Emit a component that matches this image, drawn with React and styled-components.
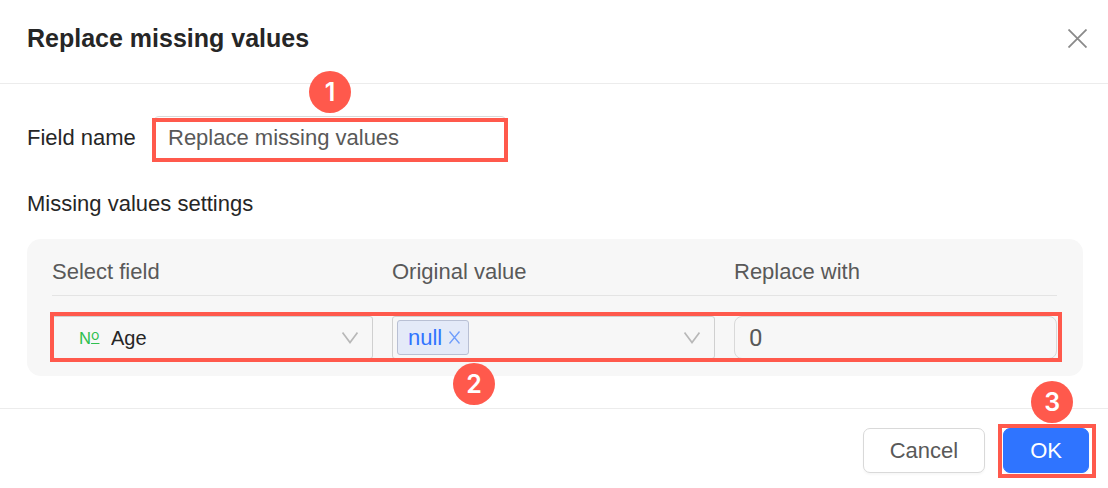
import React, { useState } from "react";
import styled, { createGlobalStyle, css } from "styled-components";

function App() {
  const [fieldName, setFieldName] = useState("Replace missing values");
  const [field, setField] = useState("Age");
  const [tags, setTags] = useState(["null"]);
  const [replacement, setReplacement] = useState("0");

  const removeTag = (tag) => {
    setTags((prevTags) => prevTags.filter((item) => item !== tag));
  };

  return (
    <>
      <GlobalStyle />
      <Dialog role="dialog" aria-labelledby="dialog-title">
        <Header>
          <Title id="dialog-title">Replace missing values</Title>
          <CloseButton type="button" aria-label="Close">
            <CrossIcon width={19} height={19} />
          </CloseButton>
        </Header>
        <Body>
          <FieldRow>
            <Label htmlFor="field-name">Field name</Label>
            <NameHighlight>
              <TextInput
                id="field-name"
                value={fieldName}
                onChange={(e) => setFieldName(e.target.value)}
              />
              <Badge $left="156px" $top="-45px">
                1
              </Badge>
            </NameHighlight>
          </FieldRow>
          <SectionTitle>Missing values settings</SectionTitle>
          <Panel>
            <HeadRow>
              <label htmlFor="select-field">Select field</label>
              <label htmlFor="original-value">Original value</label>
              <label htmlFor="replace-with">Replace with</label>
            </HeadRow>
            <ControlsRow>
              <SelectBox $wide>
                <NumberSign>
                  N<Ordinal>o</Ordinal>
                </NumberSign>
                <Select
                  id="select-field"
                  value={field}
                  onChange={(e) => setField(e.target.value)}
                >
                  <option>Age</option>
                </Select>
                <DownIcon />
              </SelectBox>
              <SelectBox>
                {tags.map((tag) => (
                  <Tag key={tag}>
                    {tag}
                    <TagRemove
                      type="button"
                      aria-label={`Remove ${tag}`}
                      onClick={() => removeTag(tag)}
                    >
                      <CrossIcon width={11} height={13} />
                    </TagRemove>
                  </Tag>
                ))}
                <TagInput id="original-value" />
                <DownIcon />
              </SelectBox>
              <ValueInput
                id="replace-with"
                value={replacement}
                onChange={(e) => setReplacement(e.target.value)}
              />
              <Badge $left="401px" $top="47px">
                2
              </Badge>
            </ControlsRow>
          </Panel>
        </Body>
        <Footer>
          <Button type="button">Cancel</Button>
          <OkHighlight>
            <Button type="button" $primary>
              OK
            </Button>
            <Badge $left="28px" $top="-47px">
              3
            </Badge>
          </OkHighlight>
        </Footer>
      </Dialog>
    </>
  );
}

export default App;

const CrossIcon = ({ width, height }) => (
  <svg
    width={width}
    height={height}
    viewBox={`0 0 ${width} ${height}`}
    aria-hidden="true"
  >
    <path
      d={`M0.5 0.5L${width - 0.5} ${height - 0.5}M${width - 0.5} 0.5L0.5 ${height - 0.5}`}
      fill="none"
      stroke="currentColor"
      strokeWidth={width > 12 ? 1.8 : 1.3}
    />
  </svg>
);

const DownIcon = () => (
  <Chevron width="16" height="12" viewBox="0 0 16 12" aria-hidden="true">
    <path
      d="M0.5 0.5L8 10.5L15.5 0.5"
      fill="none"
      stroke="currentColor"
      strokeWidth="1.7"
    />
  </Chevron>
);

const GlobalStyle = createGlobalStyle`
  * {
    box-sizing: border-box;
  }
  body {
    margin: 0;
    background: #fff;
    color: #262626;
    font-family: "Liberation Sans", Arial, sans-serif;
    font-size: 22px;
    line-height: 30px;
  }
  button, input, select {
    font: inherit;
  }
`;

const Dialog = styled.div`
  background: #fff;
`;
const Header = styled.header`
  display: flex;
  align-items: center;
  justify-content: space-between;
  height: 84px;
  padding: 0 21px 7px 27px;
  border-bottom: 1px solid #ececec;
`;
const Title = styled.h1`
  margin: 0;
  font-size: 25px;
  font-weight: bold;
`;
const CloseButton = styled.button`
  display: flex;
  padding: 0;
  border: 0;
  background: none;
  color: #8a8a8a;
  cursor: pointer;
`;

const Body = styled.main`
  padding: 32px 25px 32px 27px;
`;
const FieldRow = styled.div`
  display: flex;
  align-items: center;
`;
const Label = styled.label`
  width: 126px;
`;

/* red frame laid over the controls of a step */
const frame = css`
  position: relative;
  &::after {
    content: "";
    position: absolute;
    border: 4px solid #ff594c;
    pointer-events: none;
  }
`;
const NameHighlight = styled.div`
  ${frame}
  width: 354px;
  &::after {
    inset: 2px -1px -2px;
  }
`;
const OkHighlight = styled.div`
  ${frame}
  &::after {
    inset: -4px -7px -5px -5px;
  }
`;
const Badge = styled.span`
  position: absolute;
  z-index: 1;
  left: ${(props) => props.$left};
  top: ${(props) => props.$top};
  display: flex;
  align-items: center;
  justify-content: center;
  width: 42px;
  height: 42px;
  border-radius: 50%;
  background: #ff594c;
  color: #fff;
  font-family: Inter, sans-serif;
  font-size: 25px;
  font-weight: 600;
`;

const TextInput = styled.input`
  display: block;
  width: 100%;
  height: 44px;
  padding: 0 14px;
  border: 1px solid #d9d9d9;
  border-radius: 6px;
  background: transparent;
  color: #595959;
  outline: none;
`;
const ValueInput = styled(TextInput)`
  height: 43px;
  border-radius: 8px;
  font-family: Roboto, sans-serif;
  font-size: 24px;
`;

const SectionTitle = styled.h2`
  margin: 29px 0 20px;
  font-size: 22px;
  font-weight: normal;
`;
const Panel = styled.section`
  padding: 18px 26px 17px 25px;
  border-radius: 14px;
  background: #f7f7f7;
`;
const columns = css`
  display: grid;
  grid-template-columns: 321fr 323fr 323fr;
  column-gap: 19px;
`;
const HeadRow = styled.div`
  ${columns}
  padding-bottom: 8px;
  border-bottom: 1px solid #e4e4e4;
  color: #595959;
`;
const ControlsRow = styled.div`
  ${columns}
  ${frame}
  margin-top: 20px;
  &::after {
    inset: -4px -5px -3px -2px;
  }
`;
const SelectBox = styled.div`
  display: flex;
  align-items: center;
  min-width: 0;
  height: 43px;
  padding: 0 14px 0 ${(props) => (props.$wide ? "26px" : "4px")};
  border: 1px solid #d0d0d0;
  border-radius: 3px;
`;
const NumberSign = styled.span`
  width: 22px;
  color: #2fc04f;
  font-family: Inter, sans-serif;
  font-size: 16px;
  white-space: nowrap;
`;
const Ordinal = styled.span`
  font-size: 14px;
  line-height: 1;
  vertical-align: 4px;
  text-decoration: underline;
  text-decoration-thickness: 1px;
  text-underline-offset: 3px;
`;
const Select = styled.select`
  flex: 1;
  min-width: 0;
  padding: 0 0 0 10px;
  border: 0;
  appearance: none;
  background: none;
  color: #262626;
  font-size: 20px;
  outline: none;
`;
const Chevron = styled.svg`
  flex: none;
  color: #b8b8b8;
`;
const Tag = styled.span`
  display: flex;
  align-items: center;
  height: 35px;
  padding: 0 8px 0 10px;
  border: 1px solid #b9c0d4;
  border-radius: 3px;
  background: #e4eaf8;
  color: #2f74ff;
`;
const TagRemove = styled.button`
  display: flex;
  margin-left: 7px;
  padding: 0;
  border: 0;
  background: none;
  color: #6f9dfb;
  cursor: pointer;
`;
const TagInput = styled.input`
  flex: 1;
  min-width: 0;
  border: 0;
  background: none;
  outline: none;
`;

const Footer = styled.footer`
  display: flex;
  justify-content: flex-end;
  gap: 18px;
  padding: 19px 19px 15px;
  border-top: 1px solid #ececec;
`;
const Button = styled.button`
  display: block;
  height: 45px;
  padding: 0 26px;
  border: 1px solid ${(props) => (props.$primary ? "#2f74ff" : "#d9d9d9")};
  border-radius: 7px;
  background: ${(props) => (props.$primary ? "#2f74ff" : "#fff")};
  box-shadow: 0 2px 2px rgba(0, 0, 0, 0.03);
  color: ${(props) => (props.$primary ? "#fff" : "#595959")};
  cursor: pointer;
`;
